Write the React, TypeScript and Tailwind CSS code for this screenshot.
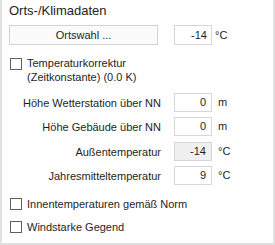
import React from 'react';

const font = { fontFamily: '"Liberation Sans", Arial, sans-serif' };

const Checkbox: React.FC = () => (
    <span className="block w-[12px] h-[12px] shrink-0 border border-[#5f5f5f] bg-white" />
);

interface RowProps {
    label: string;
    value: string;
    unit: string;
    disabled?: boolean;
    className?: string;
}

const Row: React.FC<RowProps> = ({ label, value, unit, disabled, className }) => (
    <div className={`flex items-center h-[19px] ${className ?? ''}`}>
        <div className="w-[152px] text-right text-[11px] leading-[14px] text-[#1e1e1e]">{label}</div>
        <div
            className={`ml-[13px] w-[38px] h-[19px] border border-[#d7d7d7] flex items-center justify-end pr-[5px] text-[11px] text-[#1e1e1e] ${
                disabled ? 'bg-[#f0f0f0]' : 'bg-white'
            }`}
        >
            {value}
        </div>
        <div className="ml-[6px] text-[11px] text-[#1e1e1e]">{unit}</div>
    </div>
);

export default function App() {
    return (
        <div
            style={font}
            className="w-[275px] h-[245px] bg-white border-l-2 border-r-2 border-b-2 border-[#e1e1e1] pl-[7px] flex flex-col"
        >
            {/* Title */}
            <div className="mt-[2px] text-[13px] leading-[18px] text-[#222]">Orts-/Klimadaten</div>

            {/* Ortswahl */}
            <div className="mt-[5px] flex items-center h-[20px]">
                <button className="w-[149px] h-[20px] border border-[#d3d3d3] bg-[#fbfbfb] text-[11px] text-[#1e1e1e]">
                    Ortswahl ...
                </button>
                <div className="ml-[16px] w-[38px] h-[20px] border border-[#d7d7d7] bg-white flex items-center justify-end pr-[4px] text-[11px] text-[#1e1e1e]">
                    -14
                </div>
                <div className="ml-[3px] text-[11px] text-[#1e1e1e]">°C</div>
            </div>

            {/* Temperaturkorrektur */}
            <div className="mt-[11px] ml-[1px] flex items-start">
                <div className="mt-[2px]">
                    <Checkbox />
                </div>
                <div className="ml-[5px] text-[11px] leading-[14px] text-[#1e1e1e]">
                    Temperaturkorrektur
                    <br />
                    (Zeitkonstante) (0.0 K)
                </div>
            </div>

            <Row className="mt-[9px]" label="Höhe Wetterstation über NN" value="0" unit="m" />
            <Row className="mt-[5px]" label="Höhe Gebäude über NN" value="0" unit="m" />
            <Row className="mt-[6px]" label="Außentemperatur" value="-14" unit="°C" disabled />
            <Row className="mt-[5px]" label="Jahresmitteltemperatur" value="9" unit="°C" />

            <div className="mt-[13px] ml-[1px] flex items-center h-[12px]">
                <Checkbox />
                <div className="ml-[5px] text-[11px] leading-[14px] text-[#1e1e1e]">Innentemperaturen gemäß Norm</div>
            </div>
            <div className="mt-[11px] ml-[1px] flex items-center h-[12px]">
                <Checkbox />
                <div className="ml-[5px] text-[11px] leading-[14px] text-[#1e1e1e]">Windstarke Gegend</div>
            </div>
        </div>
    );
}
